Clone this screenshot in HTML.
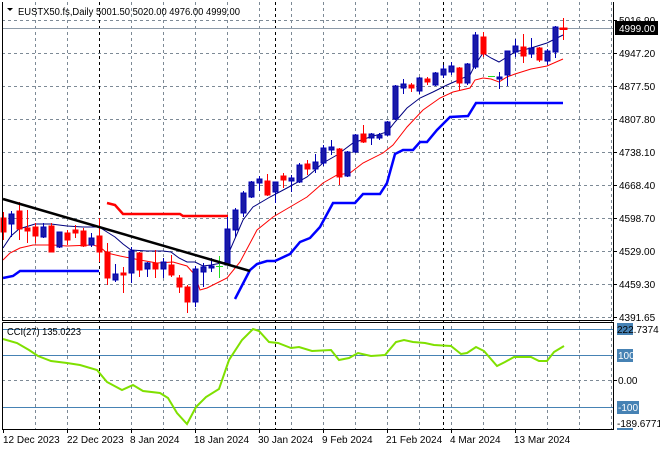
<!DOCTYPE html>
<html><head><meta charset="utf-8"><style>
html,body{margin:0;padding:0;background:#fff;}
svg{display:block;font-family:"Liberation Sans",sans-serif;font-size:10px;}
</style></head><body>
<svg width="660" height="450" viewBox="0 0 660 450" xmlns="http://www.w3.org/2000/svg">
<rect width="660" height="450" fill="#fff"/>
<g stroke="#7d8a96" stroke-width="1" stroke-dasharray="3,3" fill="none">
<path d="M2 20.5H613M2 53.5H613M2 86.5H613M2 119.5H613M2 152.5H613M2 185.5H613M2 218.5H613M2 251.5H613M2 284.5H613M2 317.5H613M2 380.5H613"/>
<path d="M35.5 2V429M67.5 2V429M131.5 2V429M163.5 2V429M195.5 2V429M227.5 2V429M259.5 2V429M291.5 2V429M323.5 2V429M355.5 2V429M387.5 2V429M419.5 2V429M451.5 2V429M483.5 2V429M515.5 2V429M547.5 2V429M579.5 2V429M611.5 2V429"/>
</g>
<g stroke="#000" stroke-width="1" stroke-dasharray="3,3">
<path d="M99.5 2V429M275.5 2V429M443.5 2V429"/>
</g>
<path d="M2 28.5H613" stroke="#8c9aa8" stroke-width="1"/>
<path d="M2 329.5H613M2 355.5H613M2 407.5H613" stroke="#4682b4" stroke-width="1"/>
<polyline fill="none" stroke="#ff0000" stroke-width="2.5" points="107,203 115,205 123,214 180,214 183,216 228,216"/>
<polyline fill="none" stroke="#0000ff" stroke-width="2.5" points="3,278 13,276 20,271 99,271"/>
<polyline fill="none" stroke="#0000ff" stroke-width="2.5" points="235,299 250,270 257,264 267,261 275,261 290,254 300,242 310,238 320,227 333,203 355,203 363,194 380,194 387,183 395,154 403,150 413,150 420,142 427,142 437,130 450,117 468,116 476,103 563,103"/>
<polyline fill="none" stroke="#ff0000" stroke-width="1" points="3,260 10,253 20,248 33,245 53,245 67,246 93,245 100,247 107,253 120,256 140,260 157,263 173,262 187,266 195,275 200,290 207,288 227,278 240,262 257,230 273,217 290,207 307,197 323,183 337,175 350,173 363,163 383,153 393,145 407,127 423,110 440,98 453,92 470,88 475,80 483,78 491,79 499,82 507,77 515,74 531,69 547,66 563,59"/>
<polyline fill="none" stroke="#000080" stroke-width="1" points="3,248 11,236 19,229 35,224 51,224 67,226 83,227 99,227 107,232 115,237 123,244 131,250 147,251 163,251 171,252 179,258 187,262 195,262 203,266 211,265 227,262 230,250 243,220 253,207 270,197 287,188 307,177 323,163 337,155 353,143 370,137 387,132 395,122 407,108 420,98 433,92 447,85 470,75 475,65 483,53 491,58 499,62 507,57 515,52 531,48 547,43 563,35"/>
<g stroke-width="1">
<g stroke="#ff0000" fill="#ff0000">
<path d="M3.5 212V240M19.5 202V240M27.5 210V243M35.5 223V243M51.5 223V252M67.5 230V245M75.5 225V238M83.5 228V247M99.5 218V262M107.5 243V285M123.5 267V293M139.5 252V277M155.5 250V278M171.5 255V277M179.5 275V293M187.5 285V313M267.5 174V196M283.5 173V188M307.5 160V175M339.5 148V185M363.5 125V143M411.5 83V92M427.5 77V85M459.5 67V90M483.5 32V57M523.5 34V63M539.5 47V62M563.5 18V40"/>
<rect x="1" y="218" width="5" height="14"/><rect x="17" y="211" width="5" height="18"/><rect x="25" y="228" width="5" height="3"/><rect x="33" y="227" width="5" height="9"/><rect x="49" y="226" width="5" height="26"/><rect x="65" y="233" width="5" height="7"/><rect x="73" y="230" width="5" height="3"/><rect x="81" y="231" width="5" height="15"/><rect x="97" y="236" width="5" height="16"/><rect x="105" y="252" width="5" height="26"/><rect x="121" y="273" width="5" height="2"/><rect x="137" y="253" width="5" height="17"/><rect x="153" y="263" width="5" height="6"/><rect x="169" y="265" width="5" height="10"/><rect x="177" y="278" width="5" height="9"/><rect x="185" y="287" width="5" height="15"/><rect x="265" y="181" width="5" height="14"/><rect x="281" y="176" width="5" height="4"/><rect x="305" y="164" width="5" height="5"/><rect x="337" y="149" width="5" height="28"/><rect x="361" y="134" width="5" height="8"/><rect x="409" y="85" width="5" height="3"/><rect x="425" y="79" width="5" height="3"/><rect x="457" y="68" width="5" height="15"/><rect x="481" y="37" width="5" height="17"/><rect x="521" y="47" width="5" height="9"/><rect x="537" y="48" width="5" height="12"/><rect x="560" y="28" width="7" height="1.5"/>
</g>
<g stroke="#0000b4" fill="#1a1aa6">
<path d="M11.5 211V237M43.5 223V238M59.5 232V248M91.5 233V247M115.5 264V282M131.5 247V283M147.5 262V277M163.5 258V278M195.5 266V307M203.5 263V287M211.5 258V272M227.5 217V265M235.5 208V237M243.5 191V217M251.5 181V198M259.5 176V191M275.5 182V203M291.5 175V192M299.5 163V183M315.5 154V173M323.5 145V166M331.5 140V155M347.5 151V177M355.5 134V153M371.5 133V145M379.5 133V140M387.5 121V136M395.5 85V120M403.5 79V94M419.5 77V94M435.5 72V86M443.5 65V78M451.5 62V75M467.5 63V85M475.5 32V69M499.5 72V89M507.5 51V86M515.5 39V57M531.5 38V58M547.5 49V65M555.5 26V58"/>
<rect x="9" y="214" width="5" height="10"/><rect x="41" y="227" width="5" height="10"/><rect x="57" y="232" width="5" height="15"/><rect x="89" y="238" width="5" height="7"/><rect x="113" y="274" width="5" height="6"/><rect x="129" y="251" width="5" height="22"/><rect x="145" y="263" width="5" height="6"/><rect x="161" y="262" width="5" height="7"/><rect x="193" y="269" width="5" height="33"/><rect x="201" y="267" width="5" height="5"/><rect x="209" y="266" width="5" height="2"/><rect x="225" y="229" width="5" height="36"/><rect x="233" y="210" width="5" height="20"/><rect x="241" y="193" width="5" height="20"/><rect x="249" y="182" width="5" height="15"/><rect x="257" y="179" width="5" height="4"/><rect x="273" y="182" width="5" height="10"/><rect x="289" y="178" width="5" height="3"/><rect x="297" y="165" width="5" height="17"/><rect x="313" y="162" width="5" height="7"/><rect x="321" y="148" width="5" height="15"/><rect x="329" y="147" width="5" height="3"/><rect x="345" y="152" width="5" height="24"/><rect x="353" y="135" width="5" height="17"/><rect x="369" y="134" width="5" height="4"/><rect x="377" y="135" width="5" height="3"/><rect x="385" y="122" width="5" height="13"/><rect x="393" y="86" width="5" height="33"/><rect x="401" y="84" width="5" height="4"/><rect x="417" y="78" width="5" height="13"/><rect x="433" y="73" width="5" height="12"/><rect x="441" y="69" width="5" height="6"/><rect x="449" y="66" width="5" height="6"/><rect x="465" y="64" width="5" height="19"/><rect x="473" y="35" width="5" height="32"/><rect x="497" y="77" width="5" height="2"/><rect x="505" y="51" width="5" height="24"/><rect x="513" y="46" width="5" height="6"/><rect x="529" y="48" width="5" height="6"/><rect x="545" y="51" width="5" height="10"/><rect x="553" y="27" width="5" height="25"/>
</g>
<path d="M219.5 256V278M216 266.5H223M488 76.5H495" stroke="#22dd22"/>
</g>
<line x1="3" y1="199" x2="250" y2="271" stroke="#000" stroke-width="2.5"/>
<polyline fill="none" stroke="#7fe000" stroke-width="2" points="3,339 17,343 29,350 38,356 51,361 67,363 80,365 97,370 107,382 122,390 133,385 143,391 160,393 168,398 177,413 187,424 196,407 206,397 219,389 229,360 242,340 253,329 259,331 269,342 278,343 291,348 299,347 312,351 331,350 339,360 349,358 358,353 371,356 385,355 396,342 404,340 413,342 425,343 434,345 451,346 461,354 467,353 476,347 484,351 497,366 505,362 514,357 531,357 539,361 547,361 554,352 564,346"/>
<g stroke="#000" stroke-width="1" fill="none">
<path d="M2.5 2V320.5H613.5V2M2.5 322.5V429.5H613.5V322.5H2.5"/>
<path d="M613 20.5H617M613 53.5H617M613 86.5H617M613 119.5H617M613 152.5H617M613 185.5H617M613 218.5H617M613 251.5H617M613 284.5H617M613 317.5H617M613 380.5H617"/>
<path d="M3.5 429V433M67.5 429V433M131.5 429V433M195.5 429V433M259.5 429V433M323.5 429V433M387.5 429V433M451.5 429V433M515.5 429V433"/>
</g>
<g fill="#000">
<text x="619" y="24">5016.90</text>
<text x="619" y="57">4947.20</text>
<text x="619" y="90">4877.50</text>
<text x="619" y="123">4807.80</text>
<text x="619" y="156">4738.10</text>
<text x="619" y="189">4668.40</text>
<text x="619" y="222">4598.70</text>
<text x="619" y="255">4529.00</text>
<text x="619" y="288">4459.30</text>
<text x="619" y="321">4391.65</text>
</g>
<rect x="615" y="21" width="43" height="14" fill="#000"/>
<text x="619" y="32" fill="#fff">4999.00</text>
<rect x="617" y="323" width="16" height="12" fill="#4682b4"/>
<text x="617" y="333" fill="#000">222.7374</text>
<rect x="617" y="349" width="16" height="13" fill="#4682b4"/>
<text x="618" y="359" fill="#fff">100</text>
<text x="618" y="384" fill="#000">0.00</text>
<rect x="617" y="401" width="22" height="13" fill="#4682b4"/>
<text x="618" y="411" fill="#fff">-100</text>
<text x="617" y="427" fill="#000">-189.6771</text>
<rect x="617" y="428" width="16" height="2" fill="#4682b4"/>
<path d="M7 8H13L10 11Z" fill="#000"/>
<text x="18" y="15" fill="#000" textLength="222" lengthAdjust="spacingAndGlyphs">EUSTX50.fs,Daily  5001.50 5020.00 4976.00 4999.00</text>
<text x="7" y="335" fill="#000" textLength="74" lengthAdjust="spacingAndGlyphs">CCI(27) 135.0223</text>
<g fill="#000">
<text x="3" y="443">12 Dec 2023</text>
<text x="67" y="443">22 Dec 2023</text>
<text x="130" y="443">8 Jan 2024</text>
<text x="194" y="443">18 Jan 2024</text>
<text x="258" y="443">30 Jan 2024</text>
<text x="322" y="443">9 Feb 2024</text>
<text x="386" y="443">21 Feb 2024</text>
<text x="450" y="443">4 Mar 2024</text>
<text x="514" y="443">13 Mar 2024</text>
</g>
</svg>
</body></html>
